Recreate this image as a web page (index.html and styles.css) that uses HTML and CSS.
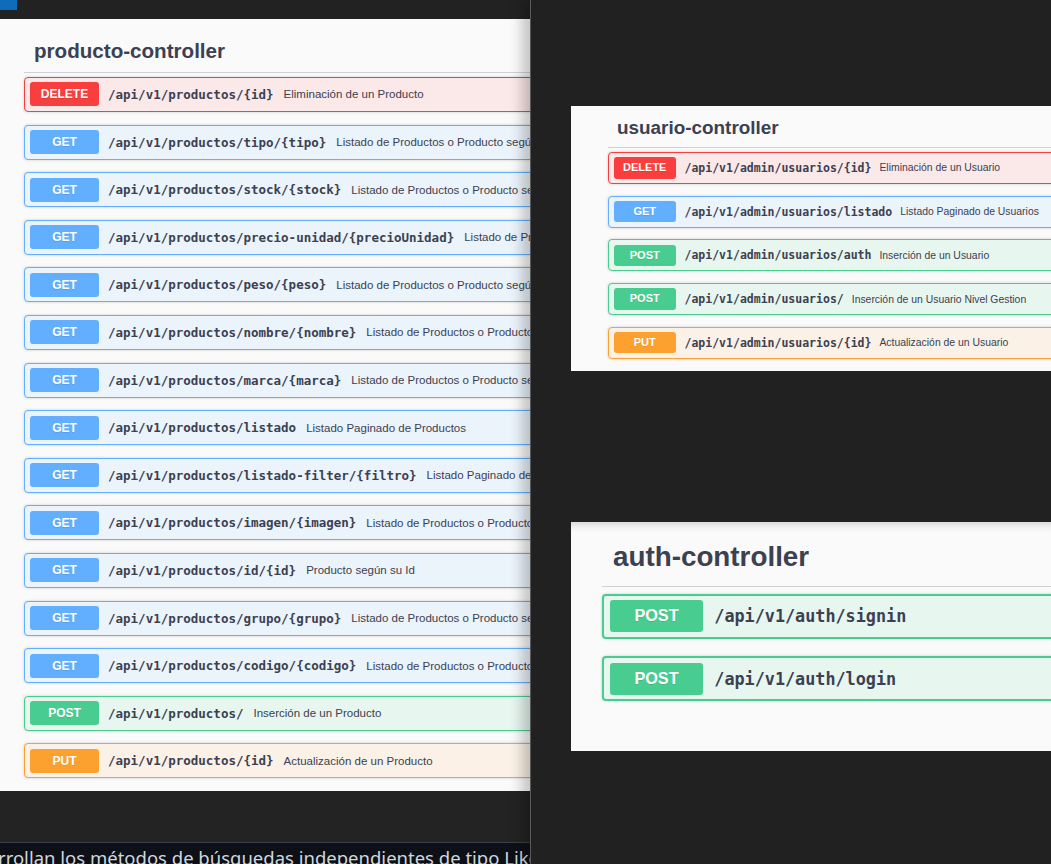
FILE: index.html
```html
<!DOCTYPE html>
<html lang="es">
<head>
<meta charset="utf-8">
<title>Swagger controllers</title>
<link rel="stylesheet" href="styles.css">
</head>
<body>
<div class="desktop">
  <section class="win-left">
    <div class="topbar"><span class="tab-accent"></span></div>
    <div class="swagger producto">
      <h3 class="tag">producto-controller</h3>
      <div class="ops">
        <div class="op op-delete"><span class="method">DELETE</span><span class="path">/api/v1/productos/{id}</span><span class="desc">Eliminación de un Producto</span></div>
        <div class="op op-get"><span class="method">GET</span><span class="path">/api/v1/productos/tipo/{tipo}</span><span class="desc">Listado de Productos o Producto según su Tipo</span></div>
        <div class="op op-get"><span class="method">GET</span><span class="path">/api/v1/productos/stock/{stock}</span><span class="desc">Listado de Productos o Producto según su Stock</span></div>
        <div class="op op-get"><span class="method">GET</span><span class="path">/api/v1/productos/precio-unidad/{precioUnidad}</span><span class="desc">Listado de Productos o Producto según su Precio Unidad</span></div>
        <div class="op op-get"><span class="method">GET</span><span class="path">/api/v1/productos/peso/{peso}</span><span class="desc">Listado de Productos o Producto según su Peso</span></div>
        <div class="op op-get"><span class="method">GET</span><span class="path">/api/v1/productos/nombre/{nombre}</span><span class="desc">Listado de Productos o Producto según su Nombre</span></div>
        <div class="op op-get"><span class="method">GET</span><span class="path">/api/v1/productos/marca/{marca}</span><span class="desc">Listado de Productos o Producto según su Marca</span></div>
        <div class="op op-get"><span class="method">GET</span><span class="path">/api/v1/productos/listado</span><span class="desc">Listado Paginado de Productos</span></div>
        <div class="op op-get"><span class="method">GET</span><span class="path">/api/v1/productos/listado-filter/{filtro}</span><span class="desc">Listado Paginado de Productos Filtrados</span></div>
        <div class="op op-get"><span class="method">GET</span><span class="path">/api/v1/productos/imagen/{imagen}</span><span class="desc">Listado de Productos o Producto según su Imagen</span></div>
        <div class="op op-get"><span class="method">GET</span><span class="path">/api/v1/productos/id/{id}</span><span class="desc">Producto según su Id</span></div>
        <div class="op op-get"><span class="method">GET</span><span class="path">/api/v1/productos/grupo/{grupo}</span><span class="desc">Listado de Productos o Producto según su Grupo</span></div>
        <div class="op op-get"><span class="method">GET</span><span class="path">/api/v1/productos/codigo/{codigo}</span><span class="desc">Listado de Productos o Producto según su Código</span></div>
        <div class="op op-post"><span class="method">POST</span><span class="path">/api/v1/productos/</span><span class="desc">Inserción de un Producto</span></div>
        <div class="op op-put"><span class="method">PUT</span><span class="path">/api/v1/productos/{id}</span><span class="desc">Actualización de un Producto</span></div>
      </div>
    </div>
    <div class="gap"></div>
    <div class="md-strip"><p class="md-text">rrollan los métodos de búsquedas independientes de tipo Like</p></div>
  </section>

  <section class="win-right">
    <div class="swagger usuario">
      <h3 class="tag">usuario-controller</h3>
      <div class="ops">
        <div class="op op-delete"><span class="method">DELETE</span><span class="path">/api/v1/admin/usuarios/{id}</span><span class="desc">Eliminación de un Usuario</span></div>
        <div class="op op-get"><span class="method">GET</span><span class="path">/api/v1/admin/usuarios/listado</span><span class="desc">Listado Paginado de Usuarios</span></div>
        <div class="op op-post"><span class="method">POST</span><span class="path">/api/v1/admin/usuarios/auth</span><span class="desc">Inserción de un Usuario</span></div>
        <div class="op op-post"><span class="method">POST</span><span class="path">/api/v1/admin/usuarios/</span><span class="desc">Inserción de un Usuario Nivel Gestion</span></div>
        <div class="op op-put"><span class="method">PUT</span><span class="path">/api/v1/admin/usuarios/{id}</span><span class="desc">Actualización de un Usuario</span></div>
      </div>
    </div>

    <div class="swagger auth">
      <h3 class="tag">auth-controller</h3>
      <div class="ops">
        <div class="op op-post"><span class="method">POST</span><span class="path">/api/v1/auth/signin</span></div>
        <div class="op op-post"><span class="method">POST</span><span class="path">/api/v1/auth/login</span></div>
      </div>
    </div>
  </section>
</div>
</body>
</html>
```

FILE: styles.css
```css
html, body {
  margin: 0;
  padding: 0;
  background: #222222;
}

.desktop {
  display: grid;
  grid-template-columns: 530px 521px;
  width: 1051px;
  height: 864px;
  overflow: hidden;
  background: #222222;
}

/* ---------- left window ---------- */
.win-left {
  display: flex;
  flex-direction: column;
  min-width: 0;
  overflow: hidden;
  background: #232323;
}

.topbar {
  flex: none;
  height: 19px;
  background: #222222;
}

.tab-accent {
  display: block;
  width: 17px;
  height: 10px;
  background: #0f6cbd;
}

.swagger {
  background: #fafafa;
  box-sizing: border-box;
  overflow: hidden;
  color: #3b4151;
}

.tag {
  margin: 0;
  font-family: "Liberation Sans", Arial, sans-serif;
  font-weight: bold;
  color: #3b4151;
  white-space: nowrap;
  border-bottom: 1px solid rgba(59, 65, 81, 0.22);
  box-sizing: content-box;
  width: 900px;
}

.op {
  display: flex;
  align-items: center;
  box-sizing: border-box;
  border: 1px solid;
  border-radius: 4px;
  box-shadow: 0 0 3px rgba(0, 0, 0, 0.19);
  white-space: nowrap;
  width: 900px;
}

.method {
  flex: none;
  text-align: center;
  color: #ffffff;
  font-family: "Liberation Sans", Arial, sans-serif;
  font-weight: bold;
  border-radius: 3px;
  text-shadow: 0 1px 0 rgba(0, 0, 0, 0.1);
}

.path {
  font-family: "DejaVu Sans Mono", monospace;
  font-weight: bold;
  color: #3b4151;
}

.desc {
  font-family: "Liberation Sans", Arial, sans-serif;
  color: #3b4151;
}

.op-delete { background: #fbe8e8; border-color: #f93e3e; }
.op-delete .method { background: #f93e3e; }
.op-get { background: #ebf3fb; border-color: #61affe; }
.op-get .method { background: #61affe; }
.op-post { background: #e8f6f0; border-color: #49cc90; }
.op-post .method { background: #49cc90; }
.op-put { background: #fbf1e6; border-color: #fca130; }
.op-put .method { background: #fca130; }

/* producto (left) scale */
.producto {
  flex: none;
  height: 772px;
  padding-left: 24px;
}

.producto .tag {
  font-size: 20.6px;
  padding-top: 9.6px;
  height: 43.4px;
  line-height: 43.4px;
  padding-left: 10px;
}

.producto .ops { margin-top: 4px; }

.producto .op {
  height: 35px;
  margin-bottom: 12.6px;
  padding-left: 5px;
}

.producto .method {
  width: 69px;
  height: 24px;
  line-height: 24px;
  font-size: 12px;
}

.producto .path {
  margin-left: 9px;
  font-size: 12.5px;
}

.producto .desc {
  margin-left: 10px;
  font-size: 11.5px;
}

.gap {
  flex: none;
  height: 51px;
  background: #232323;
}

.md-strip {
  flex: 1;
  border-top: 1px solid #3d3f44;
  background: #0d1117;
  overflow: hidden;
}

.md-text {
  margin: 0 0 0 -2px;
  font-family: "Noto Sans", "Open Sans", sans-serif;
  font-size: 18.5px;
  line-height: 30px;
  color: #d0d7de;
  white-space: nowrap;
}

/* ---------- right window ---------- */
.win-right {
  position: relative;
  z-index: 1;
  display: flex;
  flex-direction: column;
  min-width: 0;
  overflow: hidden;
  background: #212121;
  border-left: 1px solid #595959;
  box-shadow: -8px 0 12px rgba(0, 0, 0, 0.22);
}

.usuario {
  flex: none;
  margin-top: 106px;
  margin-left: 40px;
  height: 265px;
  padding-left: 37px;
}

.usuario .tag {
  font-size: 18.9px;
  padding-top: 1.7px;
  height: 39px;
  line-height: 39px;
  padding-left: 9px;
}

.usuario .ops { margin-top: 4.3px; }

.usuario .op {
  height: 32px;
  margin-bottom: 11.7px;
  padding-left: 4.5px;
}

.usuario .method {
  width: 62.5px;
  height: 21.5px;
  line-height: 21.5px;
  font-size: 11px;
}

.usuario .path {
  margin-left: 8.5px;
  font-size: 11.5px;
}

.usuario .desc {
  margin-left: 8px;
  font-size: 10.4px;
}

.auth {
  flex: none;
  margin-top: 150.7px;
  margin-left: 40px;
  height: 229px;
  padding-left: 31px;
  padding-top: 6px;
  box-shadow: inset 0 10px 10px -8px rgba(0, 0, 0, 0.18);
}

.auth .tag {
  font-size: 27.8px;
  height: 58px;
  line-height: 58px;
  padding-left: 11px;
}

.auth .ops { margin-top: 7px; }

.auth .op {
  height: 45px;
  margin-bottom: 17.7px;
  padding-left: 6.3px;
  border-width: 2px;
}

.auth .method {
  width: 92.4px;
  height: 31.7px;
  line-height: 31.7px;
  font-size: 16.2px;
}

.auth .path {
  margin-left: 11.6px;
  font-size: 16.8px;
}
```
